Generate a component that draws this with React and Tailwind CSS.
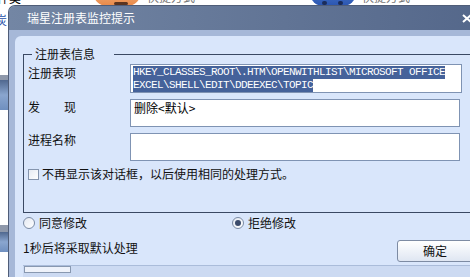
import React from 'react';

// Desktop fragments peeking out behind the dialog
const DesktopBehind = () => (
    <div className="absolute inset-0 pointer-events-none">
        <span className="absolute left-[-3px] top-[-9px] text-[12px] leading-[14px] text-black">件类</span>
        <span className="absolute left-[-5px] top-[13px] text-[12px] leading-[14px] text-[#1e4fa8]">炭</span>
        <div className="absolute left-0 top-[75px] w-[8px] h-[5px] bg-[#8e98aa]" />
        <div className="absolute left-0 top-[80px] w-[8px] h-[30px] bg-linear-to-b from-[#50688f] via-[#8aa6cf] to-[#6f8fbf]" />
        <div className="absolute left-0 top-[225px] w-[8px] h-[7px] bg-[#8e98aa]" />
        <div className="absolute left-0 top-[232px] w-[8px] h-[20px] bg-linear-to-b from-[#50688f] via-[#8aa6cf] to-[#6f8fbf]" />

        <div className="absolute left-[93px] top-[-22px] w-[48px] h-[28px] rounded-full bg-linear-to-b from-[#f7c48a] to-[#e8894a]" />
        <div className="absolute left-[114px] top-[2px] w-[14px] h-[3px] rounded bg-[#5a3420]" />
        <span className="absolute left-[147px] top-[-10px] text-[12px] leading-[14px] text-[#777]">快捷方式</span>

        <div className="absolute left-[310px] top-[-20px] w-[46px] h-[26px] rounded-full bg-linear-to-b from-[#5a86d8] to-[#2a55b0]" />
        <div className="absolute left-[322px] top-[1px] w-[5px] h-[4px] rounded bg-[#1a2c5a]" />
        <div className="absolute left-[338px] top-[1px] w-[5px] h-[4px] rounded bg-[#1a2c5a]" />
        <span className="absolute left-[362px] top-[-10px] text-[12px] leading-[14px] text-[#777]">快捷方式</span>
    </div>
);

const Radio = ({ checked, label }) => (
    <div className="flex items-center gap-[4px]">
        <span className="w-[12px] h-[12px] rounded-full border border-[#7b8ba4] bg-linear-to-br from-[#e4e9f2] to-white flex items-center justify-center">
            {checked && <span className="w-[6px] h-[6px] rounded-full bg-[#3b4b6b]" />}
        </span>
        <span className="text-[12px] leading-[14px] text-[#111]">{label}</span>
    </div>
);

export default function App() {
    return (
        <div className="relative w-[470px] h-[277px] overflow-hidden bg-white pt-[5px] pl-[8px] font-['Noto_Sans_CJK_SC','Noto_Sans',sans-serif]">
            <DesktopBehind />

            {/* Dialog */}
            <div className="relative z-10 w-[480px] h-[272px] flex flex-col rounded-tl-[7px] border-l border-t border-[#4f5d78] bg-[#a6b8d8] overflow-hidden">
                {/* Title bar */}
                <div className="relative h-[24px] shrink-0 flex items-center pl-[18px] bg-linear-to-r from-[#7386a4] to-[#54678a] text-white">
                    <span className="text-[12px] leading-[14px]">瑞星注册表监控提示</span>
                    {/* close button */}
                    <svg className="absolute left-[453px] top-[8px]" width="10" height="9" viewBox="0 0 10 9">
                        <path d="M1 1 L9 8 M9 1 L1 8" stroke="#ffffff" strokeWidth="2" />
                    </svg>
                </div>

                <div className="flex-1 flex flex-col pl-[6px] pt-[6px]">
                    <div className="flex-1 flex flex-col rounded-tl-[6px] bg-[#d9e6fb] pl-[8px]">
                        {/* Registry info group */}
                        <fieldset className="mt-[11px] w-[470px] border-y border-l border-[#3a4963] pl-[4px] pt-[3px] pb-[31px]">
                            <legend className="ml-[4px] pl-[3px] pr-[19px] text-[12px] leading-[14px] text-[#111]">注册表信息</legend>

                            <div className="flex">
                                <div className="w-[102px] pt-[2px] text-[12px] leading-[14px] text-[#111]">注册表项</div>
                                <div className="w-[332px] h-[29px] border border-[#7f93b3] bg-white pl-[2px] pt-[1px] font-['Liberation_Mono',monospace] text-[11px] tracking-[-0.6px] text-white whitespace-pre">
                                    <div className="w-fit h-[13px] leading-[13px] bg-[#45629a]">HKEY_CLASSES_ROOT\.HTM\OPENWITHLIST\MICROSOFT OFFICE</div>
                                    <div className="w-fit h-[13px] leading-[13px] bg-[#45629a]">EXCEL\SHELL\EDIT\DDEEXEC\TOPIC</div>
                                </div>
                            </div>

                            <div className="flex mt-[6px]">
                                <div className="w-[102px] pt-[1px] flex justify-between pr-[54px] text-[12px] leading-[14px] text-[#111]">
                                    <span>发</span>
                                    <span>现</span>
                                </div>
                                <div className="w-[330px] h-[28px] border border-[#7f93b3] bg-white pl-[3px] pt-[1px] text-[12px] leading-[14px] text-black">删除&lt;默认&gt;</div>
                            </div>

                            <div className="flex mt-[6px]">
                                <div className="w-[102px] text-[12px] leading-[14px] text-[#111]">进程名称</div>
                                <div className="w-[330px] h-[28px] border border-[#7f93b3] bg-white" />
                            </div>

                            <div className="flex items-center gap-[3px] mt-[6px] h-[14px]">
                                <span className="w-[11px] h-[11px] border border-[#8595ae] bg-linear-to-br from-[#e6ebf3] to-white" />
                                <span className="text-[12px] leading-[14px] text-[#111]">不再显示该对话框，以后使用相同的处理方式。</span>
                            </div>
                        </fieldset>

                        {/* Choice */}
                        <div className="flex items-center mt-[3px] h-[14px]">
                            <div className="w-[209px]">
                                <Radio label="同意修改" />
                            </div>
                            <Radio checked label="拒绝修改" />
                        </div>

                        {/* Countdown + confirm */}
                        <div className="flex items-start mt-[10px]">
                            <div className="w-[374px] pt-[1px] text-[12px] leading-[14px] text-[#111]">1秒后将采取默认处理</div>
                            <button className="w-[78px] h-[22px] rounded-[3px] border border-[#7d8ba3] bg-linear-to-b from-white to-[#dfe6f2] text-[12px] leading-[14px] text-[#111] pr-[2px]">确定</button>
                        </div>

                        {/* Status strip */}
                        <div className="mt-[3px] flex-1 border-t border-[#aabcda] bg-[#ccdaf2] pl-[1px]">
                            <div className="w-[47px] h-[7px] border border-[#8898b0] bg-[#eef2fa]" />
                        </div>
                    </div>
                </div>
            </div>
        </div>
    );
}
